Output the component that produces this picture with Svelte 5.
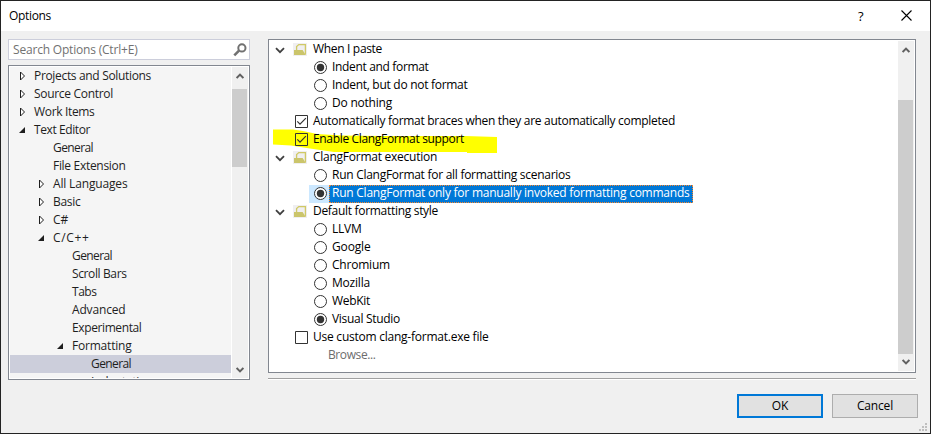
<script>
  // level = indent depth, state: closed / open / leaf, w = label width in px
  const tree = [
    { t: 'Projects and Solutions', level: 0, s: 'closed', w: 117 },
    { t: 'Source Control', level: 0, s: 'closed', w: 79 },
    { t: 'Work Items', level: 0, s: 'closed', w: 60.5 },
    { t: 'Text Editor', level: 0, s: 'open', w: 56 },
    { t: 'General', level: 1, w: 40 },
    { t: 'File Extension', level: 1, w: 72.5 },
    { t: 'All Languages', level: 1, s: 'closed', w: 74.5 },
    { t: 'Basic', level: 1, s: 'closed', w: 27.5 },
    { t: 'C#', level: 1, s: 'closed', w: 15 },
    { t: 'C/C++', level: 1, s: 'open', w: 36.5 },
    { t: 'General', level: 2, w: 40 },
    { t: 'Scroll Bars', level: 2, w: 54.5 },
    { t: 'Tabs', level: 2, w: 24.5 },
    { t: 'Advanced', level: 2, w: 53.5 },
    { t: 'Experimental', level: 2, w: 69.5 },
    { t: 'Formatting', level: 2, s: 'open', w: 59.5 },
    { t: 'General', level: 3, w: 40, sel: true },
    { t: 'Indentation', level: 3, w: 62 }
  ];
  const options = [
    { k: 'group', t: 'When I paste', w: 69 },
    { k: 'radio', t: 'Indent and format', w: 96.5, on: true },
    { k: 'radio', t: 'Indent, but do not format', w: 135.5 },
    { k: 'radio', t: 'Do nothing', w: 60 },
    { k: 'check', t: 'Automatically format braces when they are automatically completed', w: 362, on: true },
    { k: 'check', t: 'Enable ClangFormat support', w: 151, on: true, marked: true },
    { k: 'group', t: 'ClangFormat execution', w: 124 },
    { k: 'radio', t: 'Run ClangFormat for all formatting scenarios', w: 238.5 },
    { k: 'radio', t: 'Run ClangFormat only for manually invoked formatting commands', w: 357.5, on: true, sel: true },
    { k: 'group', t: 'Default formatting style', w: 125 },
    { k: 'radio', t: 'LLVM', w: 29.5 },
    { k: 'radio', t: 'Google', w: 38.5 },
    { k: 'radio', t: 'Chromium', w: 58 },
    { k: 'radio', t: 'Mozilla', w: 38 },
    { k: 'radio', t: 'WebKit', w: 38 },
    { k: 'radio', t: 'Visual Studio', w: 68, on: true },
    { k: 'check', t: 'Use custom clang-format.exe file', w: 175.5 },
    { k: 'link', t: 'Browse...', w: 47.5 }
  ];

  // Spaces the letters so that a label takes up its given width.
  function fit(node, width) {
    const apply = () => {
      node.style.letterSpacing = '0px';
      const natural = node.getBoundingClientRect().width;
      node.style.letterSpacing = (width - natural) / node.textContent.length + 'px';
    };
    apply();
    document.fonts?.ready.then(apply);
  }
</script>

{#snippet arrow(down)}
  <svg class="arrow" width="8" height="6" viewBox="0 0 8 6"><path d={down ? 'M.6 1 4 4.4 7.4 1' : 'M.6 5 4 1.6 7.4 5'} fill="none" stroke="#606060" stroke-width="2" /></svg>
{/snippet}

<div class="dialog">
  <header>
    <span class="title" use:fit={42}>Options</span>
    <span class="help">?</span>
    <svg class="close" width="11" height="11" viewBox="0 0 11 11"><path d="M.5.5l10 10M10.5.5l-10 10" stroke="#000" stroke-width="1.1" /></svg>
  </header>

  <main>
    <aside>
      <div class="search">
        <span use:fit={124.5}>Search Options (Ctrl+E)</span>
        <svg width="14" height="14" viewBox="0 0 14 14"><circle cx="8.9" cy="4.9" r="3.6" fill="none" stroke="#717171" stroke-width="2" /><path d="M6 7.6 1.3 12.3" stroke="#717171" stroke-width="2.6" /></svg>
      </div>
      <div class="tree">
        <div class="nodes">
          {#each tree as n}
            <div class="node l{n.level}" class:sel={n.sel}>
              <svg class="twist" width="8" height="10" viewBox="0 0 8 10">
                {#if n.s === 'closed'}<path d="M1.5 1v8L5.5 5z" fill="#fff" stroke="#1e1e1e" />
                {:else if n.s === 'open'}<path d="M6 2v6H0z" fill="#1e1e1e" />{/if}
              </svg>
              <span use:fit={n.w}>{n.t}</span>
            </div>
          {/each}
        </div>
        <div class="bar">
          {@render arrow(false)}
          <div class="thumb"></div>
          {@render arrow(true)}
        </div>
      </div>
    </aside>

    <section>
      <div class="panel">
        <div class="opts">
          {#each options as o}
            <div class="opt {o.k}" class:sel={o.sel}>
              {#if o.marked}
                <svg class="marker" width="226" height="26" viewBox="0 0 226 26"><path d="M1 1.5h20l10 1.5 14 3 25 1.5 40 .5h83l32 1v16h-30v-1H62l-24-3.5-19-3L1 16.5z" fill="#ff0" /></svg>
              {/if}
              {#if o.k === 'group'}
                <svg class="chev" width="10" height="7" viewBox="0 0 10 7"><path d="M1 1.2 5 5.2 9 1.2" fill="none" stroke="#404040" stroke-width="1.8" /></svg>
                <svg class="folder" width="14" height="13" viewBox="0 0 14 13"><path d="M0 0h14v13H0z" fill="#f0eff1" /><path d="M3.6 7V3.6L5.8 1.6h6.6v9.8" fill="none" stroke="#d0c966" stroke-width="1.3" /><path d="M1 7h8.6l3.2 5H1z" fill="#cbc56b" /></svg>
              {:else if o.k === 'radio'}
                <span class="box"><svg width="13" height="13" viewBox="0 0 13 13"><circle cx="6.5" cy="6.5" r="6" fill="#fff" stroke="#333" />{#if o.on}<circle cx="6.5" cy="6.5" r="3.7" fill="#333" />{/if}</svg></span>
              {:else if o.k === 'check'}
                <span class="box"><svg width="13" height="13" viewBox="0 0 13 13"><path d="M.5.5h12v12H.5z" fill={o.marked ? '#ff0' : '#fff'} stroke="#333" />{#if o.on}<path d="M2.3 6.4 5 9.1 10.9 3.2" fill="none" stroke="#333" stroke-width="1.2" />{/if}</svg></span>
              {/if}
              <div class="label"><span use:fit={o.w}>{o.t}</span></div>
            </div>
          {/each}
        </div>
        <div class="bar">
          {@render arrow(false)}
          <div class="thumb"></div>
          {@render arrow(true)}
        </div>
      </div>
      <div class="rule"></div>
    </section>
  </main>

  <footer>
    <button class="ok"><span use:fit={16.5}>OK</span></button>
    <button><span use:fit={36}>Cancel</span></button>
  </footer>
  <svg class="grip" width="8" height="8" viewBox="0 0 8 8"><path d="M6 0h2v2H6zM3 3h2v2H3zM6 3h2v2H6zM0 6h2v2H0zM3 6h2v2H3zM6 6h2v2H6z" fill="#bfbfbf" /></svg>
</div>

<style>
  * { box-sizing: border-box; }
  .dialog { position: relative; width: 931px; height: 434px; display: flex; flex-direction: column; overflow: hidden; background: #f0f0f0; border: 1px solid #232323; font: 12px/18px 'Open Sans', 'Noto Sans', sans-serif; color: #000; white-space: nowrap; }
  svg { display: block; flex: none; }
  header { height: 30px; flex: none; display: flex; align-items: center; background: #fff; padding: 0 18px 1px 8px; }
  .title { padding-top: 1px; }
  .help { margin-left: auto; width: 7px; font-size: 13px; font-weight: 500; }
  .close { margin-left: 36px; }
  main { display: flex; height: 349px; flex: none; padding: 8px 13px 0 7px; gap: 18px; }
  aside { width: 242px; display: flex; flex-direction: column; gap: 5px; }
  .search { height: 21px; flex: none; display: flex; align-items: center; justify-content: space-between; border: 1px solid #cccedb; background: #fff; color: #717171; padding: 0 2px 0 4px; }
  .tree { height: 315px; display: flex; border: 1px solid #828790; background: #fff; padding: 1px; }
  .nodes { width: 221px; height: 311px; overflow: hidden; background: #f5f5f5; color: #1e1e1e; }
  .node { display: flex; align-items: center; height: 18px; padding-left: 9px; }
  .l1 { padding-left: 28px; }
  .l2 { padding-left: 47px; }
  .l3 { padding-left: 66px; }
  .node.sel { background: #cccedb; }
  .twist { margin-right: 7px; }
  .bar { display: flex; flex-direction: column; align-items: center; background: #f0f0f0; }
  .tree .bar { width: 16px; margin-left: 1px; padding: 6px 1px 5px 0; }
  .bar .thumb { width: 15px; background: #cdcdcd; }
  .tree .thumb { height: 78px; margin-top: 10px; }
  .bar .arrow:last-child { margin-top: auto; }
  section { width: 648px; }
  .panel { height: 334px; display: flex; justify-content: space-between; border: 1px solid #828790; background: #fff; padding: 1px; }
  .opt { position: relative; display: flex; align-items: center; height: 18px; padding-left: 25px; }
  .opt.group { padding-left: 5px; }
  .opt.radio { padding-left: 39px; }
  .opt.link { padding-left: 56px; color: #6d6d6d; }
  .chev { margin-right: 8px; }
  .folder { margin: -1px 5px 0 0; }
  .label { position: relative; height: 18px; line-height: 16px; padding: 0 2px; }
  .box { position: relative; height: 18px; display: flex; align-items: flex-start; padding: 2px 3px 0 0; }
  .radio .box { padding: 2px 3px 0 5px; }
  .group .label { padding-left: 1px; }
  .sel .box { background: #cce8ff; }
  .opt.sel .label { width: 364px; background: #0078d7; color: #fff; outline: 1px dotted #ff8728; outline-offset: -1px; padding-left: 3px; }
  .opt.sel .box { padding-right: 2px; }
  .marker { position: absolute; left: 2px; top: -3px; }
  .panel .bar { width: 16px; padding: 6px 1px 6px 0; }
  .panel .thumb { height: 254px; margin-top: 47px; }
  .rule { height: 2px; margin-top: 5px; background: #fff; border-top: 1px solid #a0a0a0; }
  footer { display: flex; justify-content: flex-end; gap: 9px; padding: 14px 12px 0 0; }
  button { width: 86px; height: 24px; padding: 0; border: 1px solid #adadad; background: #e1e1e1; font: inherit; line-height: 20px; color: #000; }
  button.ok { border: 2px solid #0078d7; }
  .grip { position: absolute; right: 3px; bottom: 2px; }
</style>
